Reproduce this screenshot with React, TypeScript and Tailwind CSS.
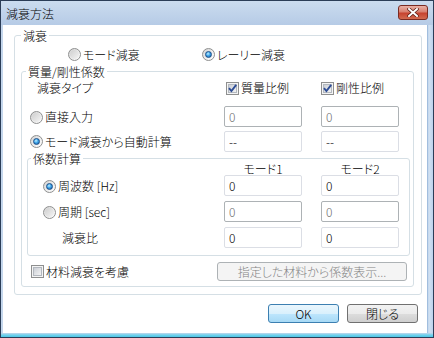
import React from "react";

function Radio({ checked }: { checked?: boolean }) {
  return (
    <span className="flex h-[13px] w-[13px] shrink-0 items-center justify-center rounded-full border border-[#8e8f8f] bg-[linear-gradient(135deg,#d2d2d2_0%,#ececec_50%,#ffffff_100%)]">
      {checked ? (
        <span className="h-[7px] w-[7px] rounded-full border border-[#1b4f8a] bg-[radial-gradient(circle_at_40%_35%,#c3f0ff_0%,#3fa6ea_45%,#16589c_100%)]" />
      ) : (
        <span className="h-[9px] w-[9px] rounded-full bg-[linear-gradient(135deg,#cfcfcf_0%,#f4f4f4_100%)]" />
      )}
    </span>
  );
}

function Check({ checked, id }: { checked?: boolean; id: string }) {
  return (
    <svg width="13" height="13" viewBox="0 0 13 13" className="shrink-0">
      <defs>
        <linearGradient id={id} x1="0" y1="0" x2="1" y2="1">
          <stop offset="0" stopColor="#c8ccd3" />
          <stop offset="1" stopColor="#f6f6f6" />
        </linearGradient>
      </defs>
      <rect x="0.5" y="0.5" width="12" height="12" fill="#f4f4f4" stroke="#8e8f8f" />
      <rect x="2.5" y="2.5" width="8" height="8" fill={`url(#${id})`} stroke="#b3b8bf" />
      {checked && (
        <path d="M3 6.2 L5.4 9 L10.2 2.8" stroke="#2e4d95" strokeWidth="1.9" fill="none" strokeLinejoin="miter" />
      )}
    </svg>
  );
}

function Field({ value, disabled }: { value: string; disabled?: boolean }) {
  return (
    <div
      className={
        disabled
          ? "flex h-[21px] w-[78px] shrink-0 items-center rounded-[2px] border border-[#adb2b5] bg-white pl-[4px] text-[12px] leading-[14px] text-[#6d6d6d]"
          : "flex h-[21px] w-[78px] shrink-0 items-center rounded-[2px] border border-[#dbdee5] bg-white pl-[4px] text-[12px] leading-[14px] text-black"
      }
    >
      {value}
    </div>
  );
}

function Label({ children }: { children: React.ReactNode }) {
  return <span className="whitespace-nowrap text-[12px] leading-[14px]">{children}</span>;
}

export default function App() {
  return (
    <div className="flex h-[338px] w-[434px] flex-col border border-[#2b3d57] bg-[#c4d6ec] font-['Noto_Sans_CJK_JP','Noto_Sans',sans-serif] text-[12px] font-light text-black [font-feature-settings:'palt']">
      {/* title bar */}
      <div className="flex h-[24px] shrink-0 items-start justify-between bg-[linear-gradient(#cbdcef,#b6cbe6)] pl-[5px] pr-[5px]">
        <span className="mt-[6px] text-[12px] leading-[14px] text-black">減衰方法</span>
        <div className="mt-[4px] flex h-[15px] w-[30px] items-center justify-center rounded-[3px] border border-[#7a2b22] bg-[linear-gradient(#eab1a6_0%,#d88070_45%,#c7432f_55%,#d26a4f_100%)]">
          <svg width="12" height="9" viewBox="0 0 12 9">
            <path d="M2 1 L10 8 M10 1 L2 8" stroke="#5b1d14" strokeWidth="3.4" strokeLinecap="square" />
            <path d="M2 1 L10 8 M10 1 L2 8" stroke="#ffffff" strokeWidth="2" strokeLinecap="square" />
          </svg>
        </div>
      </div>

      {/* body */}
      <div className="flex h-[308px] shrink-0">
        <div className="w-[2px] bg-[#c4d6ec]" />
        <div className="flex h-[308px] w-[424px] flex-col bg-white">
          {/* outer group */}
          <fieldset className="ml-[11px] mt-[4px] w-[408px] rounded-[3px] border border-[#d5dfe5] pb-[7px]">
            <legend className="ml-[6px] h-[13px] px-[2px] leading-[13px]">減衰</legend>
            <div className="mt-[6px] flex h-[13px] items-center">
              <div className="ml-[53px] flex w-[134px] items-center gap-[2px]">
                <Radio />
                <Label>モード減衰</Label>
              </div>
              <div className="flex items-center gap-[2px]">
                <Radio checked />
                <Label>レーリー減衰</Label>
              </div>
            </div>

            {/* inner group */}
            <fieldset className="ml-[6px] mt-[4px] w-[393px] rounded-[3px] border border-[#d5dfe5] pb-[5px]">
              <legend className="ml-[4px] h-[13px] px-[2px] leading-[13px]">質量/剛性係数</legend>

              <div className="mt-[3px] flex h-[14px] items-center">
                <div className="w-[204px] pl-[15px]">
                  <Label>減衰タイプ</Label>
                </div>
                <div className="flex w-[95px] items-center gap-[2px]">
                  <Check checked id="c1" />
                  <Label>質量比例</Label>
                </div>
                <div className="flex items-center gap-[2px]">
                  <Check checked id="c2" />
                  <Label>剛性比例</Label>
                </div>
              </div>

              <div className="mt-[11px] flex h-[21px] items-center">
                <div className="flex w-[202px] items-center gap-[2px] pl-[8px] pt-[1px]">
                  <Radio />
                  <Label>直接入力</Label>
                </div>
                <Field value="0" disabled />
                <div className="ml-[19px]">
                  <Field value="0" disabled />
                </div>
              </div>

              <div className="mt-[4px] flex h-[21px] items-center">
                <div className="flex w-[202px] items-center gap-[2px] pl-[8px]">
                  <Radio checked />
                  <Label>モード減衰から自動計算</Label>
                </div>
                <Field value="--" />
                <div className="ml-[19px]">
                  <Field value="--" />
                </div>
              </div>

              {/* coefficient group */}
              <fieldset className="ml-[5px] w-[383px] rounded-[3px] border border-[#d5dfe5] pb-[7px]">
                <legend className="ml-[3px] h-[13px] px-[2px] leading-[13px]">係数計算</legend>

                <div className="mt-[-3px] flex h-[13px] items-center">
                  <div className="w-[196px]" />
                  <div className="w-[78px] text-center leading-[13px]">モード1</div>
                  <div className="ml-[19px] w-[78px] text-center leading-[13px]">モード2</div>
                </div>

                <div className="flex h-[21px] items-center">
                  <div className="flex w-[196px] items-center gap-[2px] pl-[15px] pt-[1px]">
                    <Radio checked />
                    <Label>周波数 [Hz]</Label>
                  </div>
                  <Field value="0" />
                  <div className="ml-[19px]">
                    <Field value="0" />
                  </div>
                </div>

                <div className="mt-[5px] flex h-[21px] items-center">
                  <div className="flex w-[196px] items-center gap-[2px] pl-[15px] pt-[1px]">
                    <Radio />
                    <Label>周期 [sec]</Label>
                  </div>
                  <Field value="0" disabled />
                  <div className="ml-[19px]">
                    <Field value="0" disabled />
                  </div>
                </div>

                <div className="mt-[5px] flex h-[21px] items-center">
                  <div className="w-[196px] pl-[34px] pt-[1px]">
                    <Label>減衰比</Label>
                  </div>
                  <Field value="0" />
                  <div className="ml-[19px]">
                    <Field value="0" />
                  </div>
                </div>
              </fieldset>

              <div className="mt-[6px] flex h-[19px] items-center">
                <div className="flex w-[195px] items-center gap-[2px] pl-[9px]">
                  <Check id="c3" />
                  <Label>材料減衰を考慮</Label>
                </div>
                <div className="flex h-[19px] w-[190px] items-center justify-center rounded-[3px] border border-[#adb2b5] bg-[#f4f4f4] leading-[14px] text-[#838383]">
                  指定した材料から係数表示...
                </div>
              </div>
            </fieldset>
          </fieldset>

          {/* buttons */}
          <div className="mt-[9px] flex justify-end gap-[8px] pr-[9px]">
            <div className="flex h-[19px] w-[71px] items-center justify-center rounded-[3px] border border-[#3c7fb1] bg-[linear-gradient(#eaf6fd_0%,#d9f0fc_50%,#bee6fd_50%,#a7d9f5_100%)] leading-[14px]">
              OK
            </div>
            <div className="flex h-[19px] w-[71px] items-center justify-center rounded-[3px] border border-[#707070] bg-[linear-gradient(#f2f2f2_0%,#ebebeb_50%,#dddddd_50%,#cfcfcf_100%)] leading-[14px]">
              閉じる
            </div>
          </div>
        </div>
        <div className="w-[6px] bg-[linear-gradient(90deg,#8fb0d6_0%,#d2e2f3_30%,#bcd2ec_100%)]" />
      </div>

      {/* bottom frame */}
      <div className="h-[4px] shrink-0 bg-[linear-gradient(#c4d6ec_0%,#6fd2ec_50%,#4ec6e6_100%)]" />
    </div>
  );
}
